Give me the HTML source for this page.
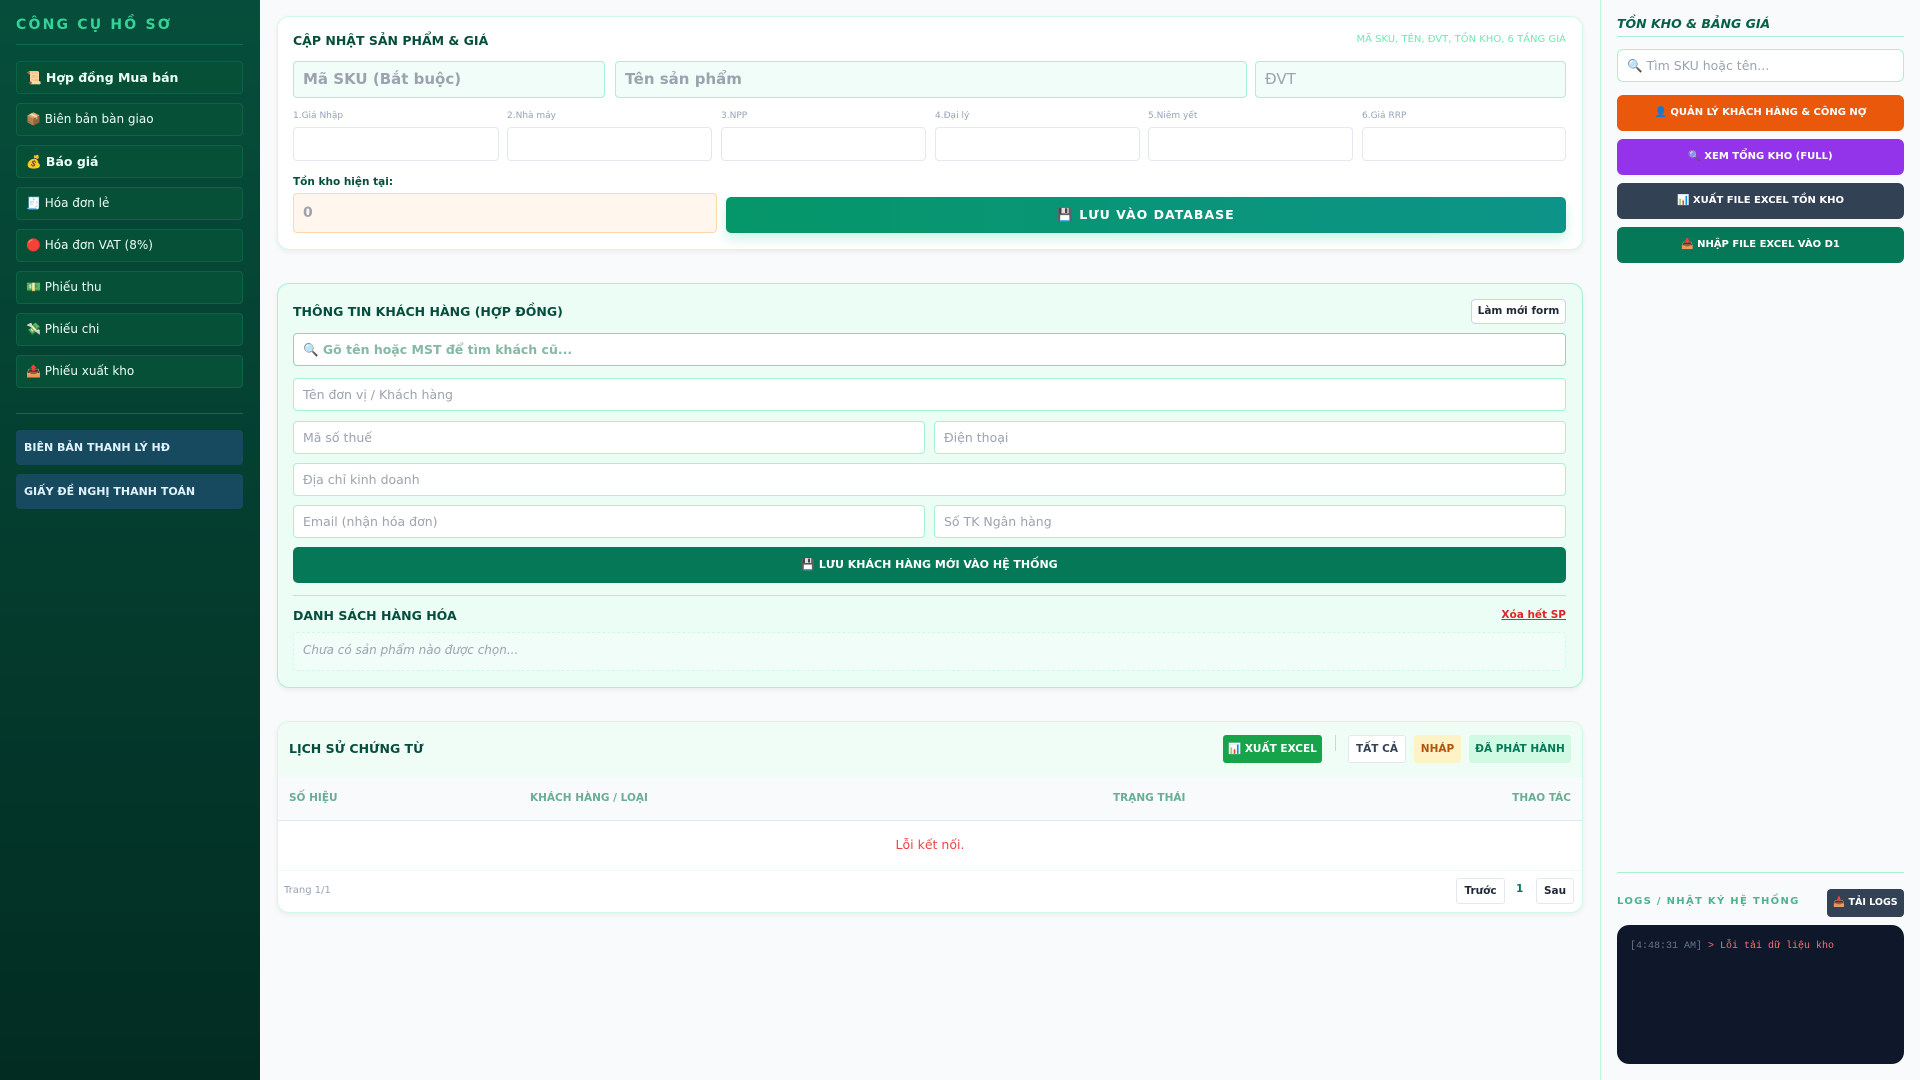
<!DOCTYPE html>
<html><head><meta charset="utf-8"><style>
*{box-sizing:border-box;margin:0;padding:0}
body{width:1920px;height:1080px;overflow:hidden;background:#f8fafc;font-family:"DejaVu Sans","Liberation Sans",sans-serif;position:relative;color:#064e3b}
.abs{position:absolute}
.side{left:0;top:0;width:260px;height:1080px;background:linear-gradient(#064e3b,#022c22)}
.side h1{position:absolute;left:16px;top:17px;font-size:14px;color:#34d399;letter-spacing:2.2px;font-weight:bold}
.hr{position:absolute;left:16px;width:227px;height:1px;background:#0f6b4f}
.nav{position:absolute;left:16px;width:227px;height:33px;background:#065038;border:1px solid #0b6447;border-radius:4px;color:#ecfdf5;font-size:12px;line-height:31px;padding-left:9px}
.nav b{font-weight:bold;font-size:12.5px}
.blue{position:absolute;left:16px;width:227px;height:35px;background:#174a5f;border-radius:4px;color:#e0f2fe;font-size:11px;font-weight:bold;line-height:35px;padding-left:8px}
.card{position:absolute;left:277px;width:1306px;background:#fff;border:1px solid #d1fae5;border-radius:12px;box-shadow:0 2px 6px rgba(0,0,0,.06)}
.t{position:absolute;font-size:12.5px;font-weight:bold;color:#064e3b}
.in{position:absolute;border:1px solid #a7f3d0;border-radius:4px;background:#fff;font-size:13px;color:#9ca3af;padding-left:9px}
.lab{position:absolute;font-size:9px;color:#94a3b8}
.btn{position:absolute;border-radius:5px;color:#fff;font-weight:bold;font-size:11px;text-align:center}
.rb{font-size:10px}
.right{left:1600px;top:0;width:320px;height:1080px;border-left:1px solid #bbf7d0;background:#f8fafc}
</style></head><body>
<div class="abs side">
<h1>CÔNG CỤ HỒ SƠ</h1>
<div class="hr" style="top:44px"></div>
<div class="nav" style="top:61px"><b>📜 Hợp đồng Mua bán</b></div>
<div class="nav" style="top:103px">📦 Biên bản bàn giao</div>
<div class="nav" style="top:145px"><b>💰 Báo giá</b></div>
<div class="nav" style="top:187px">🧾 Hóa đơn lẻ</div>
<div class="nav" style="top:229px">🔴 Hóa đơn VAT (8%)</div>
<div class="nav" style="top:271px">💵 Phiếu thu</div>
<div class="nav" style="top:313px">💸 Phiếu chi</div>
<div class="nav" style="top:355px">📤 Phiếu xuất kho</div>
<div class="hr" style="top:413px"></div>
<div class="blue" style="top:430px">BIÊN BẢN THANH LÝ HĐ</div>
<div class="blue" style="top:474px">GIẤY ĐỀ NGHỊ THANH TOÁN</div>
</div>

<!-- card 1 -->
<div class="card" style="top:16px;height:234px"></div>
<div class="t" style="left:293px;top:33px">CẬP NHẬT SẢN PHẨM &amp; GIÁ</div>
<div class="abs" style="right:354px;top:34px;font-size:10px;color:#6ee7b7">MÃ SKU, TÊN, ĐVT, TỒN KHO, 6 TẦNG GIÁ</div>
<div class="in" style="left:293px;top:61px;width:312px;height:37px;background:#f0fdf9;font-size:15px;font-weight:bold;line-height:35px">Mã SKU (Bắt buộc)</div>
<div class="in" style="left:615px;top:61px;width:632px;height:37px;background:#f0fdf9;font-size:15px;font-weight:bold;line-height:35px">Tên sản phẩm</div>
<div class="in" style="left:1255px;top:61px;width:311px;height:37px;background:#f0fdf9;font-size:15px;line-height:35px">ĐVT</div>
<div class="lab" style="left:293px;top:111px">1.Giá Nhập</div>
<div class="lab" style="left:507px;top:111px">2.Nhà máy</div>
<div class="lab" style="left:721px;top:111px">3.NPP</div>
<div class="lab" style="left:935px;top:111px">4.Đại lý</div>
<div class="lab" style="left:1148px;top:111px">5.Niêm yết</div>
<div class="lab" style="left:1362px;top:111px">6.Giá RRP</div>
<div class="in" style="left:293px;top:127px;width:206px;height:34px;border-color:#e2e8f0"></div>
<div class="in" style="left:507px;top:127px;width:205px;height:34px;border-color:#e2e8f0"></div>
<div class="in" style="left:721px;top:127px;width:205px;height:34px;border-color:#e2e8f0"></div>
<div class="in" style="left:935px;top:127px;width:205px;height:34px;border-color:#e2e8f0"></div>
<div class="in" style="left:1148px;top:127px;width:205px;height:34px;border-color:#e2e8f0"></div>
<div class="in" style="left:1362px;top:127px;width:204px;height:34px;border-color:#e2e8f0"></div>
<div class="t" style="left:293px;top:176px;font-size:10.5px">Tồn kho hiện tại:</div>
<div class="in" style="left:293px;top:193px;width:424px;height:40px;background:#fff7ed;border-color:#fed7aa;font-weight:bold;font-size:14px;line-height:38px">0</div>
<div class="btn" style="left:726px;top:197px;width:840px;height:36px;background:linear-gradient(90deg,#059669,#0d9488);font-size:12.5px;line-height:36px;letter-spacing:1px;box-shadow:0 6px 12px rgba(16,185,129,.2)">💾 LƯU VÀO DATABASE</div>

<!-- card 2 -->
<div class="card" style="top:283px;height:405px;background:#ecfdf5;border-color:#a7f3d0"></div>
<div class="t" style="left:293px;top:304px">THÔNG TIN KHÁCH HÀNG (HỢP ĐỒNG)</div>
<div class="abs" style="left:1471px;top:299px;width:95px;height:25px;background:#fff;border:1px solid #cbd5e1;border-radius:4px;font-size:10.5px;font-weight:bold;text-align:center;line-height:23px;color:#1f2937">Làm mới form</div>
<div class="in" style="left:293px;top:333px;width:1273px;height:33px;border-color:#6ee7b7;font-weight:bold;color:#86b8a4;line-height:31px;font-size:12.5px">🔍 Gõ tên hoặc MST để tìm khách cũ...</div>
<div class="in" style="left:293px;top:378px;width:1273px;height:33px;line-height:31px;font-size:12.5px">Tên đơn vị / Khách hàng</div>
<div class="in" style="left:293px;top:421px;width:632px;height:33px;line-height:31px;font-size:12.5px">Mã số thuế</div>
<div class="in" style="left:934px;top:421px;width:632px;height:33px;line-height:31px;font-size:12.5px">Điện thoại</div>
<div class="in" style="left:293px;top:463px;width:1273px;height:33px;line-height:31px;font-size:12.5px">Địa chỉ kinh doanh</div>
<div class="in" style="left:293px;top:505px;width:632px;height:33px;line-height:31px;font-size:12.5px">Email (nhận hóa đơn)</div>
<div class="in" style="left:934px;top:505px;width:632px;height:33px;line-height:31px;font-size:12.5px">Số TK Ngân hàng</div>
<div class="btn" style="left:293px;top:547px;width:1273px;height:36px;background:#047857;line-height:36px">💾 LƯU KHÁCH HÀNG MỚI VÀO HỆ THỐNG</div>
<div class="abs" style="left:293px;top:595px;width:1273px;height:1px;background:#a7f3d0"></div>
<div class="t" style="left:293px;top:608px">DANH SÁCH HÀNG HÓA</div>
<div class="abs" style="right:354px;top:609px;font-size:10.5px;font-weight:bold;color:#dc2626;text-decoration:underline">Xóa hết SP</div>
<div class="abs" style="left:293px;top:632px;width:1273px;height:39px;border:1px dashed #d1fae5;background:#f0fdf9;border-radius:4px;font-size:12px;font-style:italic;color:#9ca3af;padding-left:9px;line-height:35px">Chưa có sản phẩm nào được chọn...</div>

<!-- card 3 -->
<div class="card" style="top:721px;height:192px;overflow:hidden">
 <div style="height:55px;background:#f0fdf7;border-bottom:1px solid #ecfdf5"></div>
 <div style="height:44px;background:#f8fafc;border-bottom:1px solid #e2e8f0"></div>
 <div style="height:50px;border-bottom:1px solid #ecfdf5"></div>
</div>
<div class="t" style="left:289px;top:741px">LỊCH SỬ CHỨNG TỪ</div>
<div class="btn" style="left:1223px;top:735px;width:99px;height:28px;background:#16a34a;line-height:28px;font-size:10.5px;border-radius:3px">📊 XUẤT EXCEL</div>
<div class="abs" style="left:1335px;top:735px;width:1px;height:16px;background:#cbd5e1"></div>
<div class="abs" style="left:1348px;top:735px;width:58px;height:28px;background:#fff;border:1px solid #e2e8f0;border-radius:3px;font-size:10.5px;font-weight:bold;text-align:center;line-height:26px;color:#334155">TẤT CẢ</div>
<div class="abs" style="left:1414px;top:735px;width:47px;height:28px;background:#fef3c7;border-radius:3px;font-size:10.5px;font-weight:bold;text-align:center;line-height:28px;color:#b45309">NHÁP</div>
<div class="abs" style="left:1469px;top:735px;width:102px;height:28px;background:#d1fae5;border-radius:3px;font-size:10.5px;font-weight:bold;text-align:center;line-height:28px;color:#047857">ĐÃ PHÁT HÀNH</div>
<div class="abs" style="left:289px;top:792px;font-size:10.5px;font-weight:bold;color:#6aae94">SỐ HIỆU</div>
<div class="abs" style="left:530px;top:792px;font-size:10.5px;font-weight:bold;color:#6aae94">KHÁCH HÀNG / LOẠI</div>
<div class="abs" style="left:1113px;top:792px;font-size:10.5px;font-weight:bold;color:#6aae94">TRẠNG THÁI</div>
<div class="abs" style="right:349px;top:792px;font-size:10.5px;font-weight:bold;color:#6aae94">THAO TÁC</div>
<div class="abs" style="left:277px;width:1306px;top:837px;text-align:center;font-size:12.5px;color:#ef4444">Lỗi kết nối.</div>
<div class="abs" style="left:284px;top:885px;font-size:10px;color:#94a3b8">Trang 1/1</div>
<div class="abs" style="left:1456px;top:878px;width:49px;height:26px;background:#fff;border:1px solid #e2e8f0;border-radius:3px;font-size:10.5px;font-weight:bold;text-align:center;line-height:24px;color:#1f2937">Trước</div>
<div class="abs" style="left:1516px;top:883px;font-size:10.5px;font-weight:bold;color:#047857">1</div>
<div class="abs" style="left:1536px;top:878px;width:38px;height:26px;background:#fff;border:1px solid #e2e8f0;border-radius:3px;font-size:10.5px;font-weight:bold;text-align:center;line-height:24px;color:#1f2937">Sau</div>

<!-- right -->
<div class="abs right"></div>
<div class="abs" style="left:1617px;top:16px;font-size:12.5px;font-weight:bold;font-style:italic;color:#065f46">TỒN KHO &amp; BẢNG GIÁ</div>
<div class="abs" style="left:1617px;top:36px;width:287px;height:1px;background:#a7f3d0"></div>
<div class="abs" style="left:1617px;top:49px;width:287px;height:33px;background:#fff;border:1px solid #a7f3d0;border-radius:6px;font-size:12.5px;color:#9ca3af;line-height:31px;padding-left:9px">🔍 Tìm SKU hoặc tên...</div>
<div class="btn rb" style="left:1617px;top:95px;width:287px;height:36px;background:#ea580c;line-height:36px;border-radius:6px">👤 QUẢN LÝ KHÁCH HÀNG &amp; CÔNG NỢ</div>
<div class="btn rb" style="left:1617px;top:139px;width:287px;height:36px;background:#9333ea;line-height:36px;border-radius:6px">🔍 XEM TỔNG KHO (FULL)</div>
<div class="btn rb" style="left:1617px;top:183px;width:287px;height:36px;background:#334155;line-height:36px;border-radius:6px">📊 XUẤT FILE EXCEL TỒN KHO</div>
<div class="btn rb" style="left:1617px;top:227px;width:287px;height:36px;background:#047857;line-height:36px;border-radius:6px">📥 NHẬP FILE EXCEL VÀO D1</div>
<div class="abs" style="left:1617px;top:872px;width:287px;height:1px;background:#a7f3d0"></div>
<div class="abs" style="left:1617px;top:896px;font-size:10px;font-weight:bold;color:#4fb38e;letter-spacing:1.3px">LOGS / NHẬT KÝ HỆ THỐNG</div>
<div class="btn" style="left:1827px;top:889px;width:77px;height:28px;background:#334155;line-height:28px;font-size:9.5px;border-radius:4px">📥 TẢI LOGS</div>
<div class="abs" style="left:1617px;top:925px;width:287px;height:139px;background:#0f172a;border-radius:12px;padding:16px 13px;font-family:'Liberation Mono','DejaVu Sans Mono',monospace;font-size:10px;color:#f87171"><span style="color:#64748b">[4:48:31 AM]</span> &gt; Lỗi tải dữ liệu kho</div>
</body></html>
